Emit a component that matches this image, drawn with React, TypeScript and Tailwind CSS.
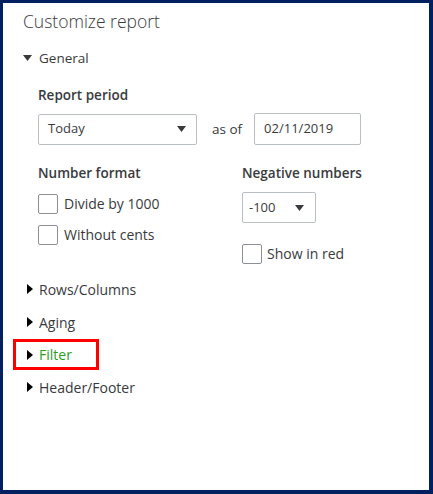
function Caret() {
  return (
    <svg width="9" height="6" viewBox="0 0 9 6" className="fill-[#393a3d]">
      <path d="M0 0h9L4.5 6z" />
    </svg>
  );
}

function SideCaret() {
  return (
    <svg width="6" height="10" viewBox="0 0 6 10" className="fill-black">
      <path d="M0 0l6 5-6 5z" />
    </svg>
  );
}

function Box() {
  return <span className="w-[20px] h-[20px] border border-[#8d9096] rounded-[2px] bg-white shrink-0" />;
}

const sections = ["Rows/Columns", "Aging", "Filter", "Header/Footer"];

export default function App() {
  return (
    <div
      className="w-[433px] h-[494px] bg-white border-[#00205f] border-t-[3px] border-l-[3px] border-r-[4px] border-b-[4px] text-[#393a3d] text-[13.5px]"
      style={{ fontFamily: '"Open Sans", Arial, sans-serif' }}
    >
      <h1 className="pl-[20px] pt-[4px] text-[17.5px] font-light leading-[28px] text-[#393a3d]">Customize report</h1>

      <div className="flex items-center gap-[7px] pl-[20px] mt-[13px] h-[20px]">
        <Caret />
        <span>General</span>
      </div>

      <div className="pl-[35px] pt-[17px]">
        <div className="font-semibold text-[13.5px] leading-[20px]">Report period</div>
        <div className="flex items-center mt-[8px] text-[13px]">
          <div className="w-[159px] h-[31px] border border-[#babec5] rounded-[2px] flex items-center justify-between pl-[9px] pr-[10px]">
            <span>Today</span>
            <Caret />
          </div>
          <span className="ml-[15px] text-[13.5px]">as of</span>
          <div className="ml-[12px] w-[107px] h-[32px] border border-[#babec5] rounded-[2px] flex items-center pl-[9px]">
            02/11/2019
          </div>
        </div>

        <div className="flex mt-[18px] text-[14px]">
          <div className="w-[204px]">
            <div className="font-semibold text-[13.5px] leading-[20px]">Number format</div>
            <div className="flex items-center gap-[6px] mt-[10px]">
              <Box />
              <span>Divide by 1000</span>
            </div>
            <div className="flex items-center gap-[6px] mt-[10px]">
              <Box />
              <span>Without cents</span>
            </div>
          </div>
          <div>
            <div className="font-semibold text-[13.5px] leading-[20px]">Negative numbers</div>
            <div className="mt-[9px] w-[74px] h-[31px] border border-[#babec5] rounded-[2px] flex items-center justify-between pl-[6px] pr-[11px] text-[13px]">
              <span>-100</span>
              <Caret />
            </div>
            <div className="flex items-center gap-[5px] mt-[20px]">
              <Box />
              <span>Show in red</span>
            </div>
          </div>
        </div>
      </div>

      <div className="flex flex-col gap-[13px] mt-[15px] pl-[10px] text-[14px]">
        {sections.map((s) => (
          <div
            key={s}
            className={
              s === "Filter"
                ? "w-[86px] h-[31px] border-[3px] border-[#ff0000] flex items-center gap-[6px] pl-[11px] -my-[6px]"
                : "h-[20px] flex items-center gap-[6px] pl-[14px]"
            }
          >
            <SideCaret />
            <span className={s === "Filter" ? "text-[#2ca01c]" : ""}>{s}</span>
          </div>
        ))}
      </div>
    </div>
  );
}
